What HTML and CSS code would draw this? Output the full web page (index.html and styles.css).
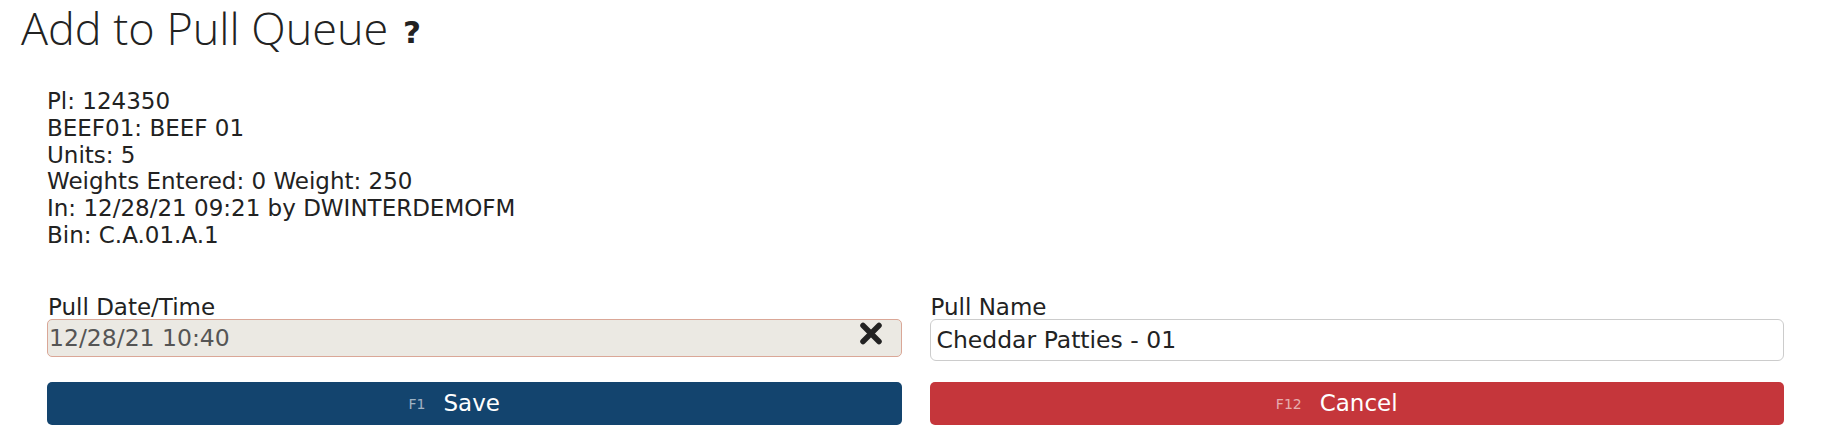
FILE: index.html
```html
<!DOCTYPE html>
<html lang="en">
<head>
  <meta charset="UTF-8">
  <meta name="viewport" content="width=device-width, initial-scale=1.0">
  <title>Add to Pull Queue</title>
  <link rel="stylesheet" href="styles.css">
</head>
<body>

  <h1 class="page-title">Add to Pull Queue <span class="help">?</span></h1>

  <div class="pallet-info">
    <div>Pl: 124350</div>
    <div>BEEF01: BEEF 01</div>
    <div>Units: 5</div>
    <div>Weights Entered: 0 Weight: 250</div>
    <div>In: 12/28/21 09:21 by DWINTERDEMOFM</div>
    <div>Bin: C.A.01.A.1</div>
  </div>

  <div class="pull-form">
    <div class="field">
      <label>Pull Date/Time</label>
      <div class="input-wrap">
        <input class="input date-input" type="text" value="12/28/21 10:40" readonly>
        <span class="clear-btn">
          <svg width="24" height="23" viewBox="0 0 24 23">
            <path d="M4 3.5 L20 19.5 M20 3.5 L4 19.5" stroke="#222" stroke-width="5.5" stroke-linecap="round" fill="none"/>
          </svg>
        </span>
      </div>
    </div>

    <div class="field">
      <label>Pull Name</label>
      <input class="input name-input" type="text" value="Cheddar Patties - 01">
    </div>

    <button class="btn btn-save"><span class="key">F1</span>Save</button>
    <button class="btn btn-cancel"><span class="key">F12</span>Cancel</button>
  </div>

</body>
</html>
```

FILE: styles.css
```css
* {
  box-sizing: border-box;
  margin: 0;
  padding: 0;
}

body {
  font-family: 'DejaVu Sans', Verdana, sans-serif;
  color: #222;
  background: #fff;
}

.page-title {
  font-family: 'Open Sans', sans-serif;
  font-weight: 300;
  font-size: 45px;
  line-height: 52px;
  padding: 2px 0 0 21px;
  color: #222;
}

.help {
  font-family: 'DejaVu Sans', sans-serif;
  font-weight: bold;
  font-size: 31px;
  vertical-align: 2px;
  margin-left: 3px;
}

.pallet-info {
  margin-top: 30px;
  padding-left: 47px;
  font-size: 23px;
  line-height: 26.8px;
}

.pull-form {
  display: grid;
  grid-template-columns: 1fr 1fr;
  column-gap: 28px;
  row-gap: 21px;
  padding: 0 45px 0 47px;
  margin-top: 46px;
}

.field label {
  display: block;
  font-size: 23px;
  line-height: 24px;
  padding-left: 1px;
}

.input-wrap {
  position: relative;
}

.input {
  display: block;
  width: 100%;
  font-family: 'DejaVu Sans', Verdana, sans-serif;
  font-size: 23.5px;
  outline: none;
}

.date-input {
  height: 38px;
  padding: 0 1px;
  background: #ebe9e3;
  color: #555;
  border: 1px solid #daa797;
  border-radius: 5px;
}

.name-input {
  height: 42px;
  padding: 0 6px;
  background: #fff;
  color: #222;
  border: 1px solid #ccc;
  border-radius: 6px;
}

.clear-btn {
  position: absolute;
  right: 19px;
  top: 3px;
  cursor: pointer;
  line-height: 0;
}

.btn {
  height: 43px;
  border: none;
  border-radius: 5px;
  color: #fff;
  font-family: 'DejaVu Sans', Verdana, sans-serif;
  font-size: 23px;
  padding-right: 40px;
  cursor: pointer;
}

.btn .key {
  font-size: 14px;
  color: rgba(255, 255, 255, 0.6);
  margin-right: 18px;
  vertical-align: 2px;
}

.btn-save {
  background: #13446e;
}

.btn-cancel {
  background: #c5363b;
}
```
